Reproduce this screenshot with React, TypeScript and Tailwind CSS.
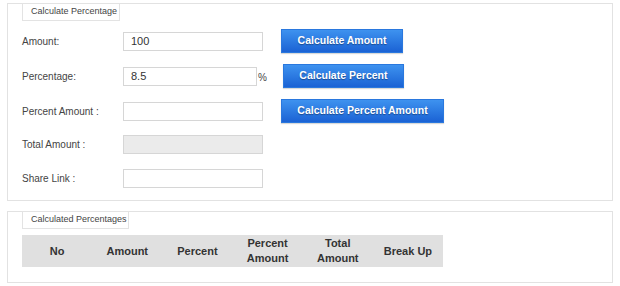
import React from 'react'

const font = { fontFamily: '"Liberation Sans", Arial, sans-serif' }

const Legend = ({ children, w }: { children: React.ReactNode; w: string }) => (
  <div className={`-mt-[1px] h-[18px] ${w} border border-[#e3e3e3] bg-white flex items-center pl-[8px] text-[9px] text-[#444]`}>
    {children}
  </div>
)

const Button = ({ children, w, ml = 'ml-[18px]' }: { children: React.ReactNode; w: string; ml?: string }) => (
  <button
    className={`${ml} ${w} h-[24px] border border-[#2a78de] bg-gradient-to-b from-[#3e92ef] to-[#1b62d4] text-white font-bold text-[10.5px] [text-shadow:0_1px_1px_rgba(0,0,0,0.35)] shadow-[0_1px_1px_rgba(0,0,0,0.15)]`}
  >
    {children}
  </button>
)

const Field = ({ value, disabled, w = 'w-[140px]' }: { value?: string; disabled?: boolean; w?: string }) => (
  <input
    readOnly
    value={value ?? ''}
    className={`${w} h-[19px] border border-[#d6d6d6] px-[7px] text-[11px] text-[#333] outline-none ${disabled ? 'bg-[#ebebeb]' : 'bg-white'}`}
  />
)

const Row = ({ label, children, mt }: { label: string; children: React.ReactNode; mt: string }) => (
  <div className={`${mt} h-[24px] flex items-center`}>
    <div className="w-[101px] text-[10px] text-[#444]">{label}</div>
    {children}
  </div>
)

export default function App() {
  const cols = ['No', 'Amount', 'Percent', 'Percent Amount', 'Total Amount', 'Break Up']
  return (
    <div className="w-[620px] h-[286px] bg-white pt-[3px] pl-[7px]" style={font}>
      <div className="w-[606px] h-[198px] border border-[#e2e2e2] pl-[14px]">
        <Legend w="w-[98px]">Calculate Percentage</Legend>
        <Row label="Amount:" mt="mt-[8px]">
          <Field value="100" />
          <Button w="w-[122px]">Calculate Amount</Button>
        </Row>
        <Row label="Percentage:" mt="mt-[11px]">
          <Field value="8.5" w="w-[134px]" />
          <span className="ml-[1px] text-[10px] text-[#444] leading-none mt-[4px]">%</span>
          <Button w="w-[121px]" ml="ml-[16px]">Calculate Percent</Button>
        </Row>
        <Row label="Percent Amount :" mt="mt-[11px]">
          <Field />
          <Button w="w-[163px]">Calculate Percent Amount</Button>
        </Row>
        <Row label="Total Amount :" mt="mt-[9px]">
          <Field disabled />
        </Row>
        <Row label="Share Link :" mt="mt-[10px]">
          <Field />
        </Row>
      </div>

      <div className="mt-[10px] w-[606px] h-[72px] border border-[#e2e2e2] pl-[14px]">
        <Legend w="w-[107px]">Calculated Percentages</Legend>
        <div className="mt-[6px] w-[421px] h-[32px] bg-[#e0e0e0] grid grid-cols-6">
          {cols.map((c) => (
            <div key={c} className="flex items-center justify-center text-center text-[11px] font-bold text-[#333] leading-[15px] px-[4px]">
              {c}
            </div>
          ))}
        </div>
      </div>
    </div>
  )
}
